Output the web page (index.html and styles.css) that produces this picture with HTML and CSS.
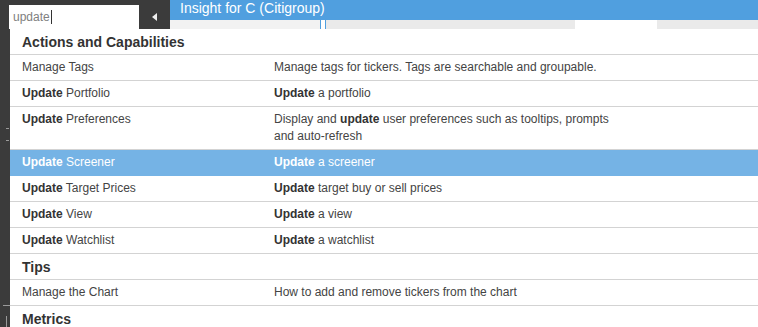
FILE: index.html
```html
<!DOCTYPE html>
<html lang="en">
<head>
    <meta charset="UTF-8">
    <meta name="viewport" content="width=device-width, initial-scale=1.0">
    <title>Insight for C (Citigroup)</title>
    <link rel="stylesheet" href="styles.css">
</head>
<body>

    <div class="topbar">
        <div class="search-wrap">
            <div class="search-input">update<span class="caret"></span></div>
            <button class="collapse-btn" type="button"><span class="arrow-left"></span></button>
        </div>
        <div class="main">
            <div class="title-bar">Insight for C (Citigroup)</div>
            <div class="tab-strip">
                <div class="tab tab-first"></div>
                <div class="tab tab-marked"></div>
                <div class="tab tab-wide"></div>
                <div class="tab tab-active"></div>
                <div class="tab tab-rest"></div>
            </div>
        </div>
    </div>

    <div class="side-ticks">
        <span class="tick t1"></span>
        <span class="tick t2"></span>
        <span class="tick t3"></span>
        <span class="tick t4"></span>
    </div>

    <div class="dropdown">
        <div class="group-title">Actions and Capabilities</div>
        <div class="item">
            <div class="item-name">Manage Tags</div>
            <div class="item-desc">Manage tags for tickers. Tags are searchable and groupable.</div>
        </div>
        <div class="item">
            <div class="item-name"><b>Update</b> Portfolio</div>
            <div class="item-desc"><b>Update</b> a portfolio</div>
        </div>
        <div class="item">
            <div class="item-name"><b>Update</b> Preferences</div>
            <div class="item-desc">Display and <b>update</b> user preferences such as tooltips, prompts and auto-refresh</div>
        </div>
        <div class="item selected">
            <div class="item-name"><b>Update</b> Screener</div>
            <div class="item-desc"><b>Update</b> a screener</div>
        </div>
        <div class="item">
            <div class="item-name"><b>Update</b> Target Prices</div>
            <div class="item-desc"><b>Update</b> target buy or sell prices</div>
        </div>
        <div class="item">
            <div class="item-name"><b>Update</b> View</div>
            <div class="item-desc"><b>Update</b> a view</div>
        </div>
        <div class="item">
            <div class="item-name"><b>Update</b> Watchlist</div>
            <div class="item-desc"><b>Update</b> a watchlist</div>
        </div>
        <div class="group-title">Tips</div>
        <div class="item">
            <div class="item-name">Manage the Chart</div>
            <div class="item-desc">How to add and remove tickers from the chart</div>
        </div>
        <div class="group-title">Metrics</div>
    </div>

</body>
</html>
```

FILE: styles.css
```css
body {
    font-family: 'Liberation Sans', Arial, sans-serif;
    background-color: #3b3b3b;
    color: #444;
    margin: 0;
    padding: 0;
    height: 327px;
    overflow: hidden;
    position: relative;
}

.topbar {
    display: flex;
}

.search-wrap {
    width: 161px;
    padding: 5px 0 0 9px;
    display: flex;
    align-items: flex-start;
}

.search-input {
    width: 126px;
    height: 24px;
    background-color: #fff;
    color: #808080;
    font-size: 12px;
    line-height: 25px;
    padding-left: 4px;
}

.caret {
    display: inline-block;
    width: 1px;
    height: 14px;
    background-color: #333;
    vertical-align: -3px;
    margin-left: 1px;
}

.collapse-btn {
    width: 31px;
    height: 24px;
    border: none;
    background-color: #3b3b3b;
    padding: 0;
    display: flex;
    align-items: center;
    justify-content: center;
}

.arrow-left {
    width: 0;
    height: 0;
    border-top: 4px solid transparent;
    border-bottom: 4px solid transparent;
    border-right: 5px solid #eee;
    margin-left: -1px;
}

.main {
    flex: 1;
}

.title-bar {
    height: 20px;
    background-color: #509fdf;
    color: #fff;
    font-size: 14px;
    line-height: 16px;
    padding-left: 10px;
}

.tab-strip {
    display: flex;
    height: 9px;
    background-color: #eaeaea;
}

.tab-first {
    width: 150px;
    background-color: #f2f2f2;
}

.tab-marked {
    width: 4px;
    border-left: 1px solid #509fdf;
    border-right: 1px solid #509fdf;
    background-color: #fff;
}

.tab-wide {
    width: 249px;
}

.tab-active {
    width: 82px;
    background-color: #fff;
}

.tab-rest {
    flex: 1;
}

.side-ticks .tick {
    position: absolute;
    background-color: #9a9a9a;
}

.tick.t1 { left: 6px; top: 128px; width: 3px; height: 1px; }
.tick.t2 { left: 6px; top: 140px; width: 3px; height: 1px; }
.tick.t3 { left: 3px; top: 305px; width: 7px; height: 1px; }
.tick.t4 { left: 6px; top: 316px; width: 1px; height: 11px; }

.dropdown {
    position: absolute;
    left: 10px;
    top: 29px;
    right: 0;
    bottom: 0;
    background-color: #fff;
}

.group-title {
    font-size: 14px;
    font-weight: bold;
    color: #333;
    line-height: 17px;
    padding: 5px 12px 3px;
    border-bottom: 1px solid #d3d3d3;
}

.item {
    display: grid;
    grid-template-columns: 252px 350px;
    font-size: 12px;
    line-height: 17px;
    padding: 4px 12px;
    border-bottom: 1px solid #d3d3d3;
}

.item b {
    color: #333;
}

.item.selected {
    background-color: #75b3e5;
    color: #fff;
    border-bottom-color: #75b3e5;
}

.item.selected b {
    color: #fff;
}
```
